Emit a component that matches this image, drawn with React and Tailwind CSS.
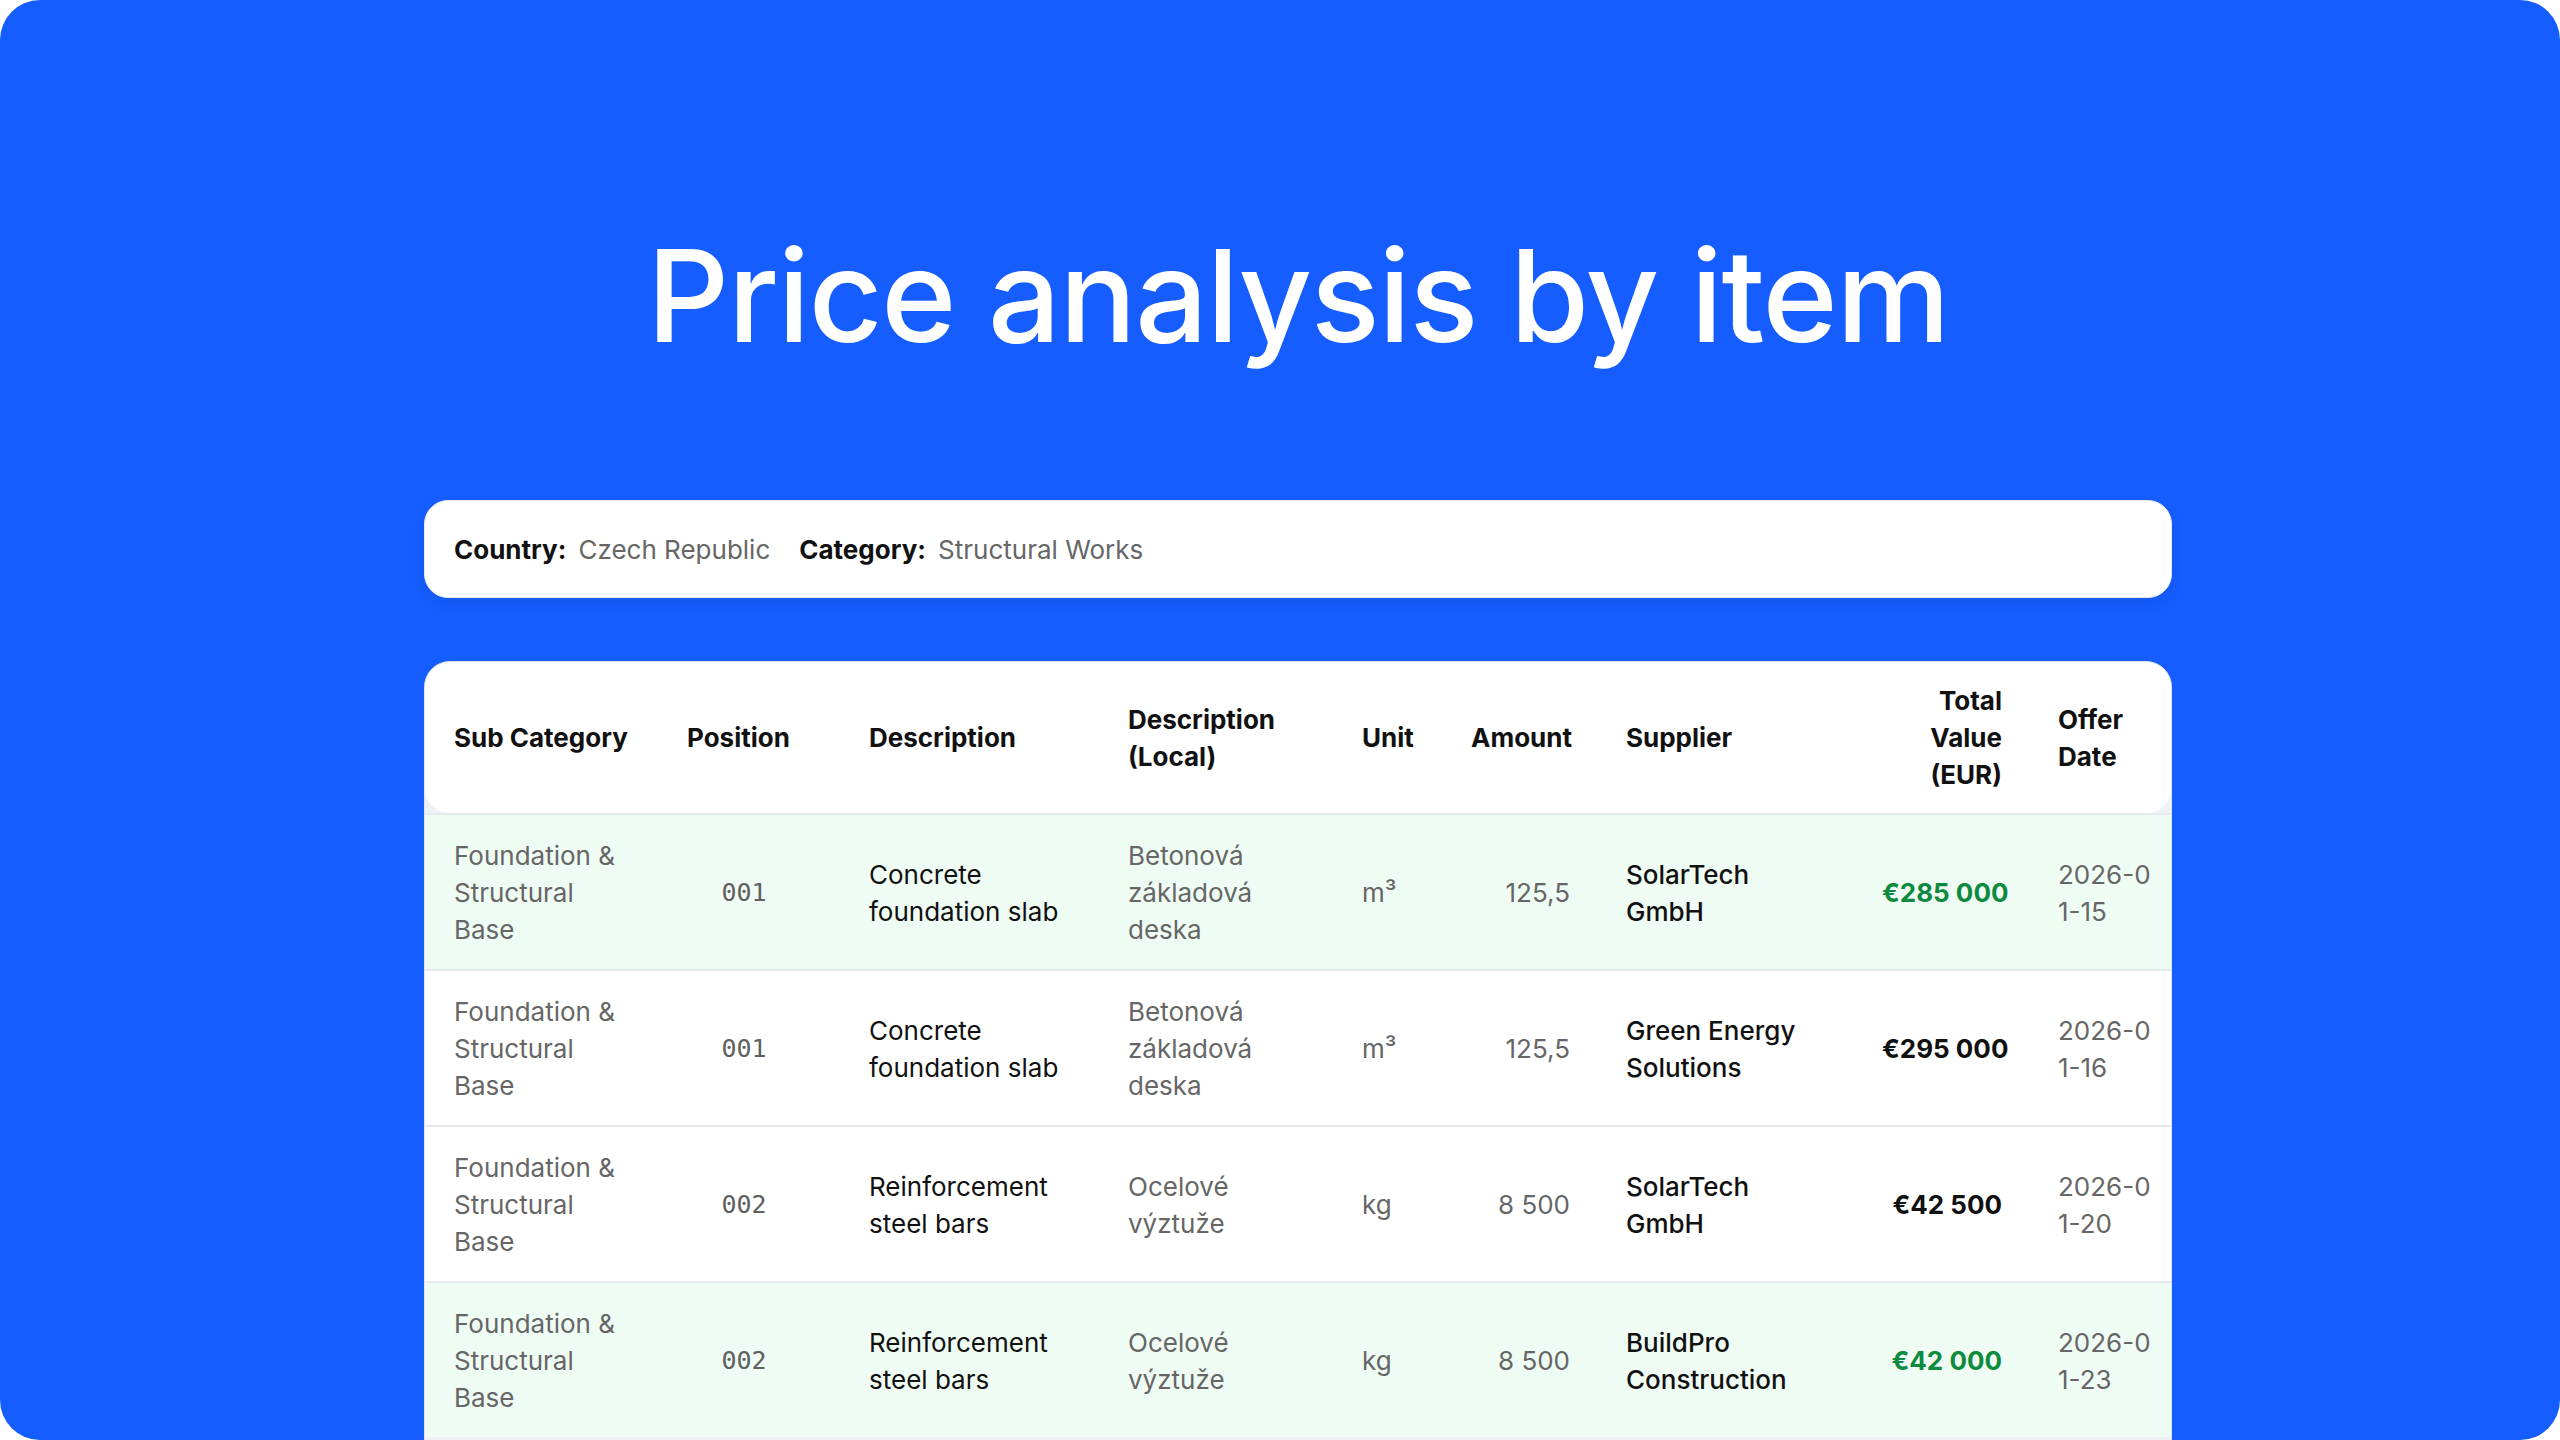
import React from "react";

const GRID =
  "grid grid-cols-[234px_182px_259px_234px_109px_155px_256px_176px_140px]";

const headers = [
  { lines: ["Sub Category"], cls: "pl-[29px] pr-[28px]" },
  { lines: ["Position"], cls: "px-[28px]" },
  { lines: ["Description"], cls: "px-[28px]" },
  { lines: ["Description", "(Local)"], cls: "px-[28px]" },
  { lines: ["Unit"], cls: "px-[28px]" },
  { lines: ["Amount"], cls: "px-[28px] text-right" },
  { lines: ["Supplier"], cls: "px-[28px]" },
  { lines: ["Total", "Value", "(EUR)"], cls: "px-[28px] text-right" },
  { lines: ["Offer", "Date"], cls: "px-[28px]" },
];

const rows = [
  {
    green: true,
    pos: "001",
    desc: ["Concrete", "foundation slab"],
    local: ["Betonová", "základová", "deska"],
    unit: "m³",
    amount: "125,5",
    supplier: ["SolarTech", "GmbH"],
    total: "€285 000",
    best: true,
    date: ["2026-0", "1-15"],
  },
  {
    green: false,
    pos: "001",
    desc: ["Concrete", "foundation slab"],
    local: ["Betonová", "základová", "deska"],
    unit: "m³",
    amount: "125,5",
    supplier: ["Green Energy", "Solutions"],
    total: "€295 000",
    best: false,
    date: ["2026-0", "1-16"],
  },
  {
    green: false,
    pos: "002",
    desc: ["Reinforcement", "steel bars"],
    local: ["Ocelové", "výztuže"],
    unit: "kg",
    amount: "8 500",
    supplier: ["SolarTech", "GmbH"],
    total: "€42 500",
    best: false,
    date: ["2026-0", "1-20"],
  },
  {
    green: true,
    pos: "002",
    desc: ["Reinforcement", "steel bars"],
    local: ["Ocelové", "výztuže"],
    unit: "kg",
    amount: "8 500",
    supplier: ["BuildPro", "Construction"],
    total: "€42 000",
    best: true,
    date: ["2026-0", "1-23"],
  },
];

function Lines({ lines }) {
  return (
    <div>
      {lines.map((l, i) => (
        <div key={i} className="whitespace-nowrap">
          {l}
        </div>
      ))}
    </div>
  );
}

export default function App() {
  return (
    <div className="w-[2560px] h-[1440px] bg-white font-['Inter',sans-serif]">
      <div className="w-full h-full rounded-[40px] bg-[#165dff] overflow-hidden flex flex-col items-center pl-[36px]">
        <h1 className="mt-[232px] text-[128px] leading-none font-medium text-white tracking-[-0.01em] whitespace-nowrap">
          Price analysis by item
        </h1>

        <div className="mt-[140px] w-[1748px] h-[98px] shrink-0 rounded-[24px] bg-white border border-[#e4e8ef] shadow-[0_6px_14px_rgba(0,0,0,0.06)] flex items-center pl-[29px] text-[26px] leading-[37px]">
          <span className="font-bold text-[#111111]">Country:</span>
          <span className="ml-[12px] text-[#666666]">Czech Republic</span>
          <span className="ml-[29px] font-bold text-[#111111]">Category:</span>
          <span className="ml-[12px] text-[#666666]">Structural Works</span>
        </div>

        <div className="mt-[63px] w-[1748px] h-[900px] shrink-0 rounded-[26px] border border-[#dfe3ea] bg-[#eef1f5] overflow-hidden text-[26px] leading-[37px]">
          <div
            className={`${GRID} h-[151px] items-center bg-white rounded-[24px] font-bold text-[#111111]`}
          >
            {headers.map((h, i) => (
              <div key={i} className={h.cls}>
                <Lines lines={h.lines} />
              </div>
            ))}
          </div>

          {rows.map((r, i) => (
            <div
              key={i}
              className={`${GRID} items-center border-t-2 border-[#e6e9ee] pt-[22px] pb-[21px] ${
                r.green ? "bg-[#effcf4]" : "bg-white"
              }`}
            >
              <div className="pl-[29px] pr-[28px] text-[#666666]">
                <Lines lines={["Foundation &", "Structural", "Base"]} />
              </div>
              <div className="pl-[28px] pr-[40px] text-center text-[#5f5f5f] font-['DejaVu_Sans_Mono',monospace] text-[25px]">
                {r.pos}
              </div>
              <div className="px-[28px] text-[#111111]">
                <Lines lines={r.desc} />
              </div>
              <div className="px-[28px] text-[#666666]">
                <Lines lines={r.local} />
              </div>
              <div className="px-[28px] text-[#666666]">{r.unit}</div>
              <div className="px-[28px] text-right text-[#666666]">
                {r.amount}
              </div>
              <div className="px-[28px] font-medium text-[#111111]">
                <Lines lines={r.supplier} />
              </div>
              <div
                className={`px-[28px] text-right font-bold whitespace-nowrap ${
                  r.best ? "text-[#0e8a3e]" : "text-[#111111]"
                }`}
              >
                {r.total}
              </div>
              <div className="px-[28px] text-[#666666]">
                <Lines lines={r.date} />
              </div>
            </div>
          ))}
        </div>
      </div>
    </div>
  );
}
